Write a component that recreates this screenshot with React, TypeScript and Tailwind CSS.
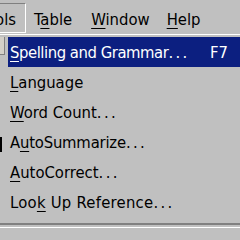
import React from "react";

const font = { fontFamily: '"DejaVu Sans Condensed", "DejaVu Sans", sans-serif' };

function U({ children }: { children: React.ReactNode }) {
  return <span className="underline decoration-1 underline-offset-[3px]">{children}</span>;
}

function Dots() {
  return <span className="tracking-[2.4px]">...</span>;
}

function Item({ children, h = false, sc, icon }: { children: React.ReactNode; h?: boolean; sc?: string; icon?: React.ReactNode }) {
  return (
    <div className="flex h-[30px] items-stretch">
      <div className="relative w-[8px] shrink-0">{icon}</div>
      <div className={`flex flex-1 items-center justify-between pl-[2px] pr-[12px] ${h ? "bg-[#0c1f80] text-white" : "text-black"}`}>
        <span className="pt-[2px] whitespace-nowrap">{children}</span>
        {sc && <span className="pt-[2px]">{sc}</span>}
      </div>
    </div>
  );
}

export default function App() {
  return (
    <div className="h-[240px] w-[240px] overflow-hidden bg-[#c0c0c0] text-[16.5px] leading-none" style={font}>
      <div className="flex h-[34px] items-start pt-[3px]">
        <div className="flex h-[30px] w-[27px] items-center justify-end border-t border-r border-b border-t-[#808080] border-r-white border-b-white pr-[9px] ml-[-1px]">
          <span className="pt-[4px]">ols</span>
        </div>
        <div className="flex h-[30px] items-center pl-[8px]">
          <span className="pt-[4px]">T<U>a</U>ble</span>
        </div>
        <div className="flex h-[30px] items-center pl-[19px]">
          <span className="pt-[4px]"><U>W</U>indow</span>
        </div>
        <div className="flex h-[30px] items-center pl-[17px]">
          <span className="pt-[4px]"><U>H</U>elp</span>
        </div>
      </div>
      <div className="h-[1px] bg-white" />
      <div className="h-[2px]" />
      <Item h sc="F7" icon={<div className="absolute left-0 top-0 h-[18px] w-[5px] border-r border-b border-[#808080] bg-[#d4d0c8]" />}>
        <span className="tracking-[-0.45px]"><U>S</U>pelling and Grammar</span><Dots />
      </Item>
      <Item><U>L</U>anguage</Item>
      <Item>
        <U>W</U>ord Count<Dots />
      </Item>
      <Item icon={<div className="absolute left-0 top-[10px] h-[15px] w-[2px] bg-black" />}>
        <span className="tracking-[-0.2px]">A<U>u</U>toSummarize</span><Dots />
      </Item>
      <Item>
        <U>A</U>utoCorrect<Dots />
      </Item>
      <Item>
        <span className="tracking-[0.25px]">Loo<U>k</U> Up Reference</span><Dots />
      </Item>
      <div className="h-[6px]" />
      <div className="h-[2px] bg-[#808080]" />
      <div className="h-[2px]" />
      <div className="h-[1px] bg-white" />
    </div>
  );
}
